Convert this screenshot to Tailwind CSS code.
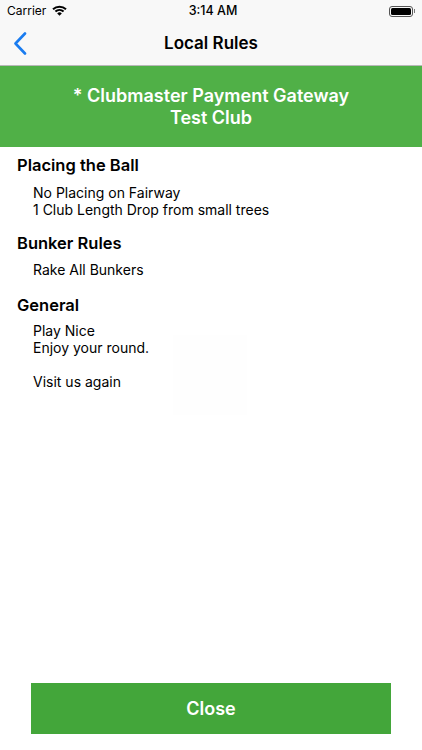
<!DOCTYPE html>
<html lang="en">
<head>
    <meta charset="UTF-8" />
    <meta name="viewport" content="width=device-width, initial-scale=1.0" />
    <title>Local Rules</title>
    <script src="https://cdn.jsdelivr.net/npm/@tailwindcss/browser@4"></script>
</head>
<body class="bg-white font-['Inter','Liberation_Sans',sans-serif] text-black">
    <div class="relative flex flex-col w-[422px] h-[750px] overflow-hidden">
        <!-- Status bar + nav -->
        <div class="bg-[#f8f8f8] h-[66px] shrink-0 border-b border-[#b8b8b8]">
            <div class="relative flex items-center justify-between h-[22px] pl-[7px] pr-[7px]">
                <div class="flex items-center gap-[6px]">
                    <span class="text-[12px] leading-[22px]">Carrier</span>
                    <svg width="15" height="11" viewBox="0 0 15 11" fill="none" class="mb-[2px]">
                        <path d="M1 4.2 A9.5 9.5 0 0 1 14 4.2" stroke="#000" stroke-width="2"/>
                        <path d="M3.4 6.6 A6 6 0 0 1 11.6 6.6" stroke="#000" stroke-width="2"/>
                        <path d="M7.5 10.8 L5.2 8.4 A3.2 3.2 0 0 1 9.8 8.4 Z" fill="#000"/>
                    </svg>
                </div>
                <span class="absolute left-[4px] right-0 text-center text-[12.5px] font-medium leading-[22px]">3:14 AM</span>
                <div class="flex items-center">
                    <div class="w-[24px] h-[11px] rounded-[3px] border border-[#555] p-[1px]">
                        <div class="w-full h-full bg-black rounded-[1.5px]"></div>
                    </div>
                    <div class="w-[1px] h-[4px] bg-[#777] ml-[1px]"></div>
                </div>
            </div>
            <div class="relative flex items-center justify-center h-[43px]">
                <svg width="14" height="23" viewBox="0 0 14 23" fill="none" class="absolute left-[13px] top-[10px]">
                    <path d="M12 1.5 L2.5 11.5 L12 21.5" stroke="#1a7cf0" stroke-width="2.6" stroke-linecap="round" stroke-linejoin="round"/>
                </svg>
                <h1 class="text-[17px] font-semibold">Local Rules</h1>
            </div>
        </div>

        <!-- Club banner -->
        <div class="bg-[#50b047] h-[81px] shrink-0 flex flex-col items-center justify-center text-white text-[18px] font-semibold leading-[22px]">
            <div>* Clubmaster Payment Gateway</div>
            <div>Test Club</div>
        </div>

        <!-- Rules -->
        <div class="relative grow pl-[17px] pt-[8px]">
            <div class="absolute left-[173px] top-[188px] w-[74px] h-[80px] bg-[#fefefe]"></div>
            <div class="relative">
                <h2 class="text-[16.5px] font-semibold leading-[20px]">Placing the Ball</h2>
                <p class="pl-[16px] pt-[9px] text-[14px] leading-[17px]">No Placing on Fairway<br />1 Club Length Drop from small trees</p>
                <h2 class="text-[16.5px] font-semibold leading-[20px] mt-[15px]">Bunker Rules</h2>
                <p class="pl-[16px] pt-[8px] text-[14px] leading-[17px]">Rake All Bunkers</p>
                <h2 class="text-[16.5px] font-semibold leading-[20px] mt-[17px]">General</h2>
                <p class="pl-[16px] pt-[7px] text-[14px] leading-[17px]">Play Nice<br />Enjoy your round.<br /><br />Visit us again</p>
            </div>
        </div>

        <!-- Close button -->
        <div class="shrink-0 px-[31px] pb-[16px]">
            <button class="w-[360px] h-[51px] bg-[#43a63a] text-white text-[18px] font-semibold">Close</button>
        </div>
    </div>
</body>
</html>
